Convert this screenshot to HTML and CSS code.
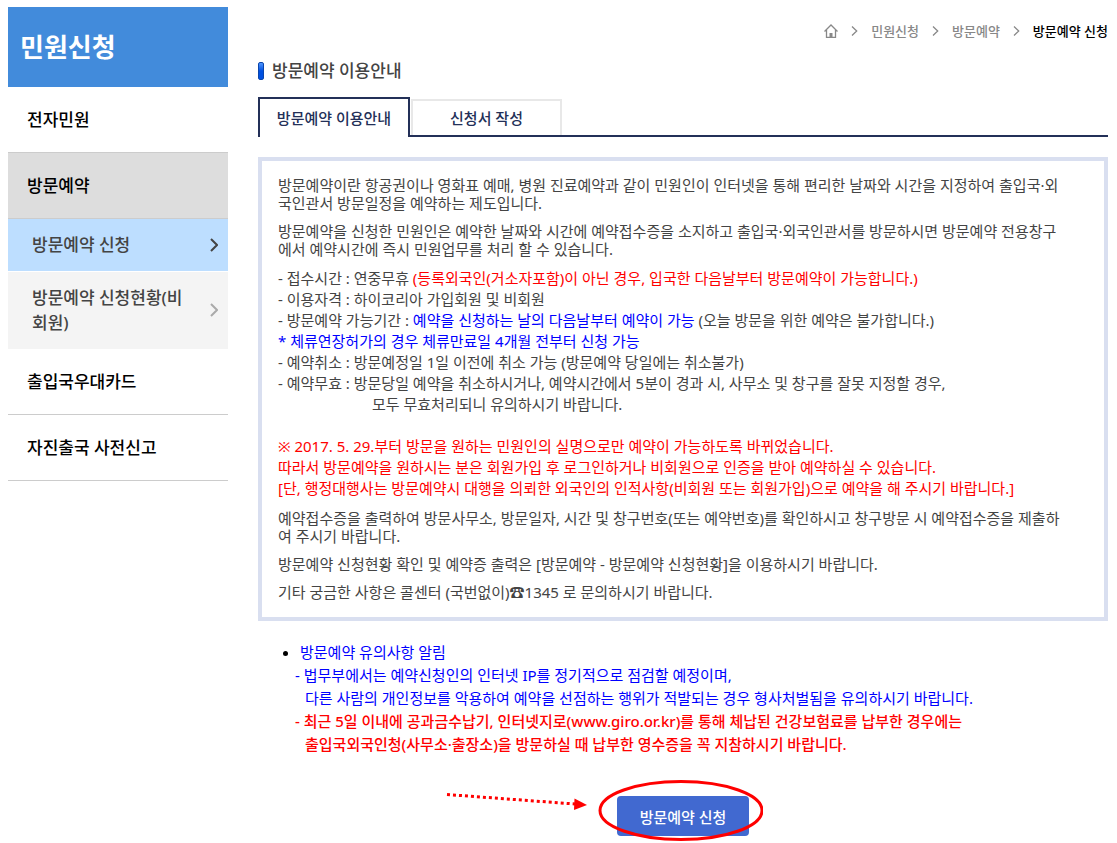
FILE: index.html
```html
<!DOCTYPE html>
<html lang="ko">
<head>
    <meta charset="UTF-8">
    <meta name="viewport" content="width=device-width, initial-scale=1.0">
    <title>방문예약 이용안내</title>
    <link rel="stylesheet" href="styles.css">
</head>
<body>
    <div class="container">
        <aside class="sidebar">
            <h2 class="sidebar-title">민원신청</h2>
            <ul class="menu">
                <li><a class="menu-link" href="#">전자민원</a></li>
                <li>
                    <a class="menu-link current" href="#">방문예약</a>
                    <ul class="submenu">
                        <li>
                            <a class="submenu-link current" href="#">
                                <span>방문예약 신청</span>
                                <svg class="arrow" width="8" height="14" viewBox="0 0 8 14"><path d="M1 1l6 6-6 6" fill="none" stroke="currentColor" stroke-width="2"/></svg>
                            </a>
                        </li>
                        <li>
                            <a class="submenu-link" href="#">
                                <span>방문예약 신청현황(비<br>회원)</span>
                                <svg class="arrow" width="8" height="14" viewBox="0 0 8 14"><path d="M1 1l6 6-6 6" fill="none" stroke="currentColor" stroke-width="2"/></svg>
                            </a>
                        </li>
                    </ul>
                </li>
                <li><a class="menu-link" href="#">출입국우대카드</a></li>
                <li><a class="menu-link" href="#">자진출국 사전신고</a></li>
            </ul>
        </aside>

        <main class="content">
            <nav class="breadcrumb">
                <a class="home" href="#" aria-label="홈">
                    <svg width="14" height="14" viewBox="0 0 14 14" fill="none" stroke="currentColor" stroke-width="1.3"><path d="M.5 7.500L7 1l6.500 6.500M2.500 6v7.300h9V6"/><path d="M5.500 9h3v4.500h-3z" fill="currentColor" stroke="none"/></svg>
                </a>
                <svg class="sep" width="7" height="10" viewBox="0 0 7 10"><path d="M1 .5L5.700 5 1 9.500" fill="none" stroke="currentColor" stroke-width="1.300"/></svg>
                <a href="#">민원신청</a>
                <svg class="sep" width="7" height="10" viewBox="0 0 7 10"><path d="M1 .5L5.700 5 1 9.500" fill="none" stroke="currentColor" stroke-width="1.300"/></svg>
                <a href="#">방문예약</a>
                <svg class="sep" width="7" height="10" viewBox="0 0 7 10"><path d="M1 .5L5.700 5 1 9.500" fill="none" stroke="currentColor" stroke-width="1.300"/></svg>
                <a class="here" href="#">방문예약 신청</a>
            </nav>

            <h3 class="page-title">방문예약 이용안내</h3>

            <div class="tabs">
                <a class="tab active" href="#">방문예약 이용안내</a>
                <a class="tab" href="#">신청서 작성</a>
            </div>

            <section class="guide">
                <p>방문예약이란 항공권이나 영화표 예매, 병원 진료예약과 같이 민원인이 인터넷을 통해 편리한 날짜와 시간을 지정하여 출입국·외<br>국인관서 방문일정을 예약하는 제도입니다.</p>
                <p>방문예약을 신청한 민원인은 예약한 날짜와 시간에 예약접수증을 소지하고 출입국·외국인관서를 방문하시면 방문예약 전용창구<br>에서 예약시간에 즉시 민원업무를 처리 할 수 있습니다.</p>
                <ul class="rules">
                    <li>- 접수시간 : 연중무휴 <span class="red">(등록외국인(거소자포함)이 아닌 경우, 입국한 다음날부터 방문예약이 가능합니다.)</span></li>
                    <li>- 이용자격 : 하이코리아 가입회원 및 비회원</li>
                    <li>- 방문예약 가능기간 : <span class="blue">예약을 신청하는 날의 다음날부터 예약이 가능</span> (오늘 방문을 위한 예약은 불가합니다.)</li>
                    <li class="blue">* 체류연장허가의 경우 체류만료일 4개월 전부터 신청 가능</li>
                    <li>- 예약취소 : 방문예정일 1일 이전에 취소 가능 (방문예약 당일에는 취소불가)</li>
                    <li>- 예약무효 : 방문당일 예약을 취소하시거나, 예약시간에서 5분이 경과 시, 사무소 및 창구를 잘못 지정할 경우,</li>
                    <li class="indent">모두 무효처리되니 유의하시기 바랍니다.</li>
                </ul>
                <ul class="rules red">
                    <li>※ 2017. 5. 29.부터 방문을 원하는 민원인의 실명으로만 예약이 가능하도록 바뀌었습니다.</li>
                    <li>따라서 방문예약을 원하시는 분은 회원가입 후 로그인하거나 비회원으로 인증을 받아 예약하실 수 있습니다.</li>
                    <li>[단, 행정대행사는 방문예약시 대행을 의뢰한 외국인의 인적사항(비회원 또는 회원가입)으로 예약을 해 주시기 바랍니다.]</li>
                </ul>
                <p>예약접수증을 출력하여 방문사무소, 방문일자, 시간 및 창구번호(또는 예약번호)를 확인하시고 창구방문 시 예약접수증을 제출하<br>여 주시기 바랍니다.</p>
                <p>방문예약 신청현황 확인 및 예약증 출력은 [방문예약 - 방문예약 신청현황]을 이용하시기 바랍니다.</p>
                <p>기타 궁금한 사항은 콜센터 (국번없이)☎1345 로 문의하시기 바랍니다.</p>
            </section>

            <section class="notice blue">
                <h4 class="notice-title">방문예약 유의사항 알림</h4>
                <p>- 법무부에서는 예약신청인의 인터넷 IP를 정기적으로 점검할 예정이며,<br>다른 사람의 개인정보를 악용하여 예약을 선점하는 행위가 적발되는 경우 형사처벌됨을 유의하시기 바랍니다.</p>
                <p class="red strong">- 최근 5일 이내에 공과금수납기, 인터넷지로(www.giro.or.kr)를 통해 체납된 건강보험료를 납부한 경우에는<br>출입국외국인청(사무소·출장소)을 방문하실 때 납부한 영수증을 꼭 지참하시기 바랍니다.</p>
            </section>

            <div class="actions">
                <button class="apply-button" type="button">방문예약 신청</button>
                <!-- Arrow and circle pointing at the apply button -->
                <svg class="marker" width="320" height="63" viewBox="0 0 320 63" aria-hidden="true">
                    <path d="M4 15.500L132 25" fill="none" stroke="#f00" stroke-width="3" stroke-dasharray="3 3"/>
                    <path d="M131.500 19.500L144 26l-13 5z" fill="#f00"/>
                    <ellipse cx="238" cy="31.500" rx="81" ry="29" fill="none" stroke="#f00" stroke-width="3"/>
                </svg>
            </div>
        </main>
    </div>
</body>
</html>
```

FILE: styles.css
```css
*, *::before {
    box-sizing: border-box;
}
body {
    margin: 0;
    padding: 7px 9px 7px 8px;
    font-family: "Noto Sans", "Noto Sans CJK KR", sans-serif;
    font-size: 15px;
    color: #444;
    background-color: #fff;
}
h2, h3, h4, p, ul {
    margin: 0;
    padding: 0;
}
ul {
    list-style: none;
}
a {
    color: inherit;
    text-decoration: none;
}
.container {
    display: flex;
    gap: 30px;
}
.red {
    color: #f00;
}
.blue {
    color: #00f;
}

/* Sidebar */
.sidebar {
    flex: 0 0 220px;
}
.sidebar-title {
    padding-left: 12px;
    line-height: 80px;
    font-size: 26px;
    font-weight: 700;
    color: #fff;
    background-color: #428bdb;
}
.menu-link {
    display: block;
    padding-left: 19px;
    line-height: 65px;
    font-size: 17px;
    font-weight: 500;
    color: #000;
    border-bottom: 1px solid #ccc;
}
.menu-link.current {
    background-color: #ddd;
}
.submenu-link {
    display: flex;
    justify-content: space-between;
    align-items: center;
    padding: 13px 10px 14px 24px;
    line-height: 25px;
    font-size: 17px;
    font-weight: 500;
    background-color: #f4f4f4;
}
.submenu-link.current {
    margin-bottom: 1px;
    background-color: #bddeff;
}
.arrow {
    color: #aaa;
}
.current .arrow {
    color: #444;
}

/* Content */
.content {
    flex: 1;
    min-width: 0;
}
.breadcrumb {
    display: flex;
    justify-content: flex-end;
    align-items: center;
    gap: 13px;
    height: 47px;
    font-size: 13px;
    font-weight: 500;
    color: #888;
}
.home {
    display: flex;
}
.here {
    color: #000;
}
.page-title {
    display: flex;
    align-items: center;
    gap: 8px;
    margin-top: 1px;
    line-height: 32px;
    font-size: 17px;
    font-weight: 500;
}
.page-title::before {
    content: "";
    width: 6px;
    height: 18px;
    border: 1px solid #0a45ad;
    border-radius: 2px;
    background: linear-gradient(#4f96ff, #0050e0 50%);
}
.tabs {
    display: flex;
    align-items: flex-end;
    gap: 1px;
    margin-top: 10px;
    border-bottom: 2px solid #233058;
}
.tab {
    width: 151px;
    height: 36px;
    line-height: 35px;
    text-align: center;
    font-weight: 500;
    color: #233058;
    border: 2px solid #e8e8e8;
    border-bottom: 0;
}
.tab.active {
    width: 152px;
    height: 40px;
    line-height: 39px;
    margin-bottom: -2px;
    border-color: #233058;
    background-color: #fff;
}
.guide {
    display: flex;
    flex-direction: column;
    gap: 10px;
    margin-top: 20px;
    padding: 15px 16px 16px;
    line-height: 18px;
    white-space: nowrap;
    border: 4px solid #d9dff0;
}
.rules {
    line-height: 21px;
}
.rules + .rules {
    margin-top: 11px;
}
.indent {
    padding-left: 94px;
}
.notice {
    margin-top: 20px;
    padding-left: 47px;
    line-height: 23px;
    white-space: nowrap;
}
.notice-title {
    display: list-item;
    margin-left: -5px;
    list-style: disc;
    font-size: 15px;
    font-weight: 400;
}
.notice-title::marker {
    color: #000;
}
.notice p {
    text-indent: -10px;
}
.strong {
    font-weight: 500;
}
.actions {
    position: relative;
    display: flex;
    justify-content: center;
    margin-top: 40px;
}
.apply-button {
    width: 132px;
    height: 40px;
    padding: 0;
    font-family: inherit;
    font-size: 15px;
    font-weight: 500;
    color: #fff;
    background-color: #4169d0;
    border: 0;
    border-radius: 4px;
    cursor: pointer;
}
.marker {
    position: absolute;
    top: -17px;
    left: calc(50% - 240px);
    pointer-events: none;
}
```
